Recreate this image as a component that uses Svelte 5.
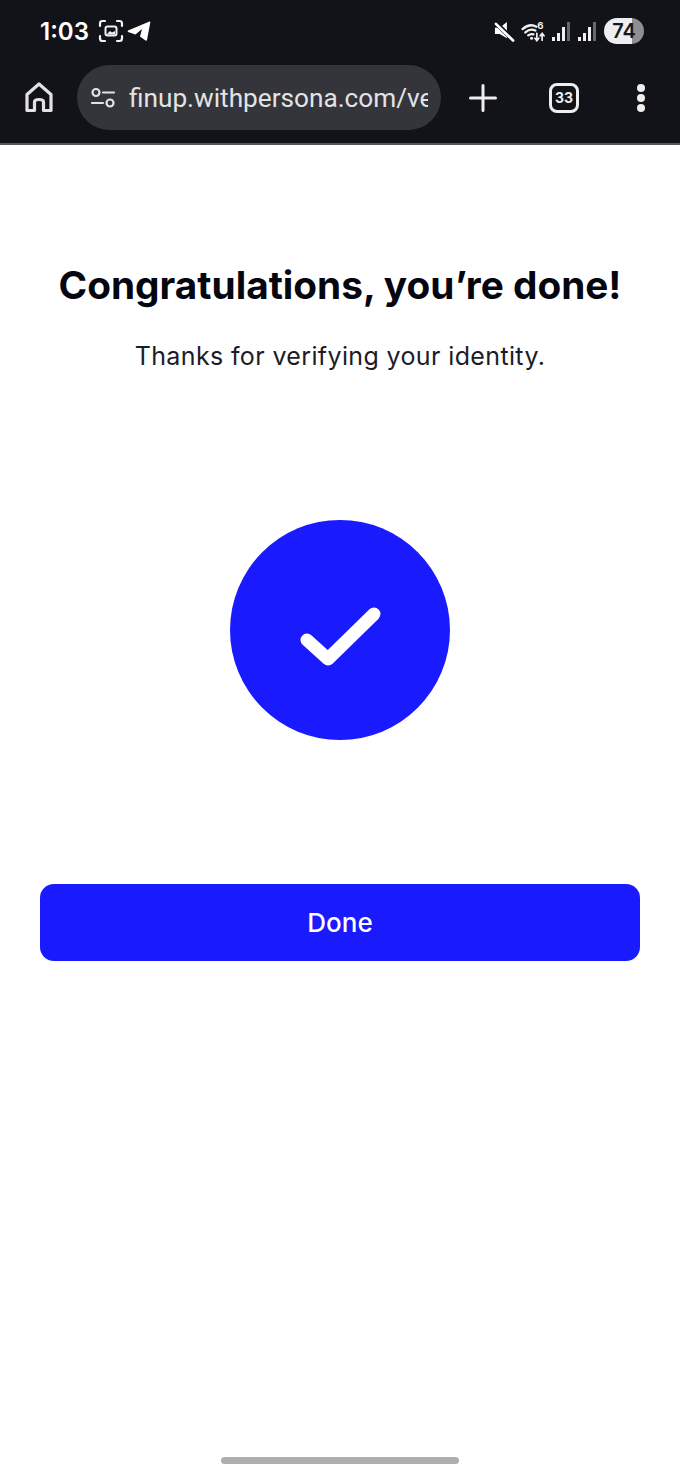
<script lang="ts">
	const url = 'finup.withpersona.com/ve';
</script>

<div class="page">
	<header class="chrome">
		<div class="status">
			<div class="status-left">
				<span class="time">1:03</span>
				<svg class="scan" width="26" height="24" viewBox="0 0 26 24" fill="none" stroke="#f2f2f2" stroke-width="2.2" stroke-linecap="round">
					<path d="M2 7V4.5Q2 2 4.5 2H7M19 2H21.500Q24 2 24 4.500V7M24 17V19.500Q24 22 21.500 22H19M7 22H4.500Q2 22 2 19.500V17" />
					<rect x="7.500" y="7.500" width="11" height="9" rx="2" stroke-width="2" />
					<path d="M9 15l3-3 2 1.500 3-1.500v3.500H9z" fill="#f2f2f2" stroke="none" />
				</svg>
				<svg class="plane" width="24" height="22" viewBox="0 0 24 22">
					<path d="M1 10.500 22.500 1.500Q23.500 1.200 23.300 2.500L20 20Q19.500 21 18.500 20.500L13 16.500 15 9 8.500 14.500 1 12Q0.300 11 1 10.500z" fill="#fff" />
				</svg>
			</div>
			<div class="status-right">
				<svg class="mute" width="21" height="21" viewBox="0 0 22 22">
					<path d="M1 7H6L13.500 1V18L6 13.500H1z" fill="#fff" />
					<path d="M1.500 1.500 21 21" stroke="#121318" stroke-width="5" />
					<path d="M2 3 20 20.500" stroke="#fff" stroke-width="2.800" stroke-linecap="round" />
				</svg>
				<svg class="wifi" width="25" height="23" viewBox="0 0 26 24" fill="none" stroke="#f0f0f0" stroke-linecap="round">
					<path d="M1.500 9.500Q9 3 16 7M4.500 13Q9.500 8.500 15 11M7.500 16Q10 14 13 15" stroke-width="2.400" />
					<circle cx="11" cy="19" r="1.600" fill="#f0f0f0" stroke="none" />
					<path d="M16.500 14v7M14.500 19l2 2.500 2-2.500M22 21v-7M20 16.500l2-2.500 2 2.500" stroke-width="1.800" />
					<text x="17" y="9" class="wifi-six">6</text>
				</svg>
				<div class="signal">
					<i class="b1"></i><i class="b2"></i><i class="b3"></i><i class="b4"></i>
				</div>
				<div class="signal">
					<i class="b1"></i><i class="b2"></i><i class="b3"></i><i class="b4"></i>
				</div>
				<div class="battery"><span>74</span></div>
			</div>
		</div>
		<div class="toolbar">
			<svg class="home" width="28" height="31" viewBox="0 0 28 31" fill="none" stroke="#e2e2e2" stroke-width="3.200" stroke-linejoin="round">
				<path d="M2 12.500 14 2 26 12.500V28.500H18.500V20Q18.500 17.500 14 17.500 9.500 17.500 9.500 20V28.500H2z" />
			</svg>
			<div class="omnibox">
				<svg width="26" height="22" viewBox="0 0 26 22" fill="none" stroke="#e3e3e5" stroke-width="2.200" stroke-linecap="round">
					<circle cx="6" cy="5.500" r="3.500" />
					<path d="M13 5.500H24M2 16H13" />
					<circle cx="20" cy="16" r="3.500" />
				</svg>
				<span class="url">{url}</span>
			</div>
			<svg class="plus" width="28" height="28" viewBox="0 0 28 28" stroke="#eee" stroke-width="3" stroke-linecap="round">
				<path d="M14 1.500V26.500M1.500 14H26.500" />
			</svg>
			<div class="tabs">33</div>
			<div class="dots"><i></i><i></i><i></i></div>
		</div>
	</header>

	<main class="content">
		<h1>Congratulations, you’re done!</h1>
		<p>Thanks for verifying your identity.</p>
		<div class="badge">
			<svg width="84" height="84" viewBox="0 0 84 84" fill="none" stroke="#fff" stroke-width="13" stroke-linecap="round" stroke-linejoin="round">
				<path d="M9 52 30 71 76 26" />
			</svg>
		</div>
		<button class="done">Done</button>
	</main>

	<div class="home-bar"></div>
</div>

<style>
	:global(body) {
		background: #fff;
	}

	.page {
		width: 680px;
		height: 1473px;
		display: flex;
		flex-direction: column;
		background: #fff;
		font-family: Inter, sans-serif;
		overflow: hidden;
	}

	.chrome {
		height: 143px;
		background: #121318;
		border-bottom: 2px solid #55565a;
		display: flex;
		flex-direction: column;
		flex: none;
	}

	.status {
		height: 65px;
		box-sizing: border-box;
		padding: 0 36px 3px 40px;
		display: flex;
		align-items: center;
		justify-content: space-between;
	}

	.status-left,
	.status-right {
		display: flex;
		align-items: center;
	}

	.time {
		color: #fff;
		font-size: 24px;
		font-weight: 600;
		width: 58px;
	}

	.plane {
		margin-left: 3px;
	}

	.wifi-six {
		fill: #f0f0f0;
		stroke: none;
		font-size: 10px;
		font-weight: 700;
		font-family: Inter, sans-serif;
	}

	.status-right {
		gap: 6px;
	}

	.signal {
		display: flex;
		align-items: flex-end;
		gap: 2px;
		height: 20px;
		width: 20px;
	}

	.signal i {
		display: block;
		width: 3px;
		background: #f0f0f0;
	}

	.signal .b1 { height: 4px; }
	.signal .b2 { height: 8px; }
	.signal .b3 { height: 14px; }
	.signal .b4 { height: 19px; background: #66676b; }

	.battery {
		width: 40px;
		height: 26px;
		border-radius: 13px;
		background: linear-gradient(to right, #eeeef2 70%, #8f8f90 70%);
		display: flex;
		align-items: center;
		justify-content: center;
		color: #17181c;
		font-size: 20px;
		font-weight: 600;
	}

	.toolbar {
		height: 65px;
		padding: 0 30px 0 25px;
		display: flex;
		align-items: center;
	}

	.omnibox {
		width: 364px;
		height: 65px;
		margin-left: 24px;
		padding: 0 13px 0 13px;
		box-sizing: border-box;
		border-radius: 33px;
		background: #33353b;
		display: flex;
		align-items: center;
		gap: 13px;
		flex: none;
	}

	.url {
		flex: 1;
		min-width: 0;
		overflow: hidden;
		white-space: nowrap;
		color: #e3e3e6;
		font-family: Roboto, sans-serif;
		font-size: 26.200px;
	}

	.plus {
		margin-left: 28px;
	}

	.tabs {
		width: 30px;
		height: 30px;
		box-sizing: border-box;
		margin-left: 52px;
		border: 3px solid #eee;
		border-radius: 8px;
		display: flex;
		align-items: center;
		justify-content: center;
		color: #eee;
		font-size: 14px;
		font-weight: 700;
	}

	.dots {
		margin-left: 58px;
		display: flex;
		flex-direction: column;
		gap: 2px;
	}

	.dots i {
		display: block;
		width: 8px;
		height: 8px;
		border-radius: 50%;
		background: #eee;
	}

	.content {
		flex: 1;
		padding: 0 40px;
		display: flex;
		flex-direction: column;
		align-items: center;
	}

	h1 {
		margin: 118px -20px 0;
		font-size: 38.750px;
		line-height: 44px;
		font-weight: 700;
		color: #05060f;
		white-space: nowrap;
	}

	p {
		margin: 31px 0 0;
		font-size: 25px;
		line-height: 36px;
		color: #1b1c28;
		letter-spacing: 0.37px;
	}

	.badge {
		width: 220px;
		height: 220px;
		margin-top: 146px;
		border-radius: 50%;
		background: #1a1aff;
		display: flex;
		align-items: center;
		justify-content: center;
	}

	.done {
		width: 100%;
		height: 77px;
		margin-top: 144px;
		border: none;
		border-radius: 14px;
		background: #1a1aff;
		color: #fff;
		font-family: Inter, sans-serif;
		font-size: 26px;
		font-weight: 500;
	}

	.home-bar {
		flex: none;
		width: 238px;
		height: 7px;
		margin: 0 auto 9px;
		border-radius: 4px;
		background: #aeaeae;
	}
</style>
